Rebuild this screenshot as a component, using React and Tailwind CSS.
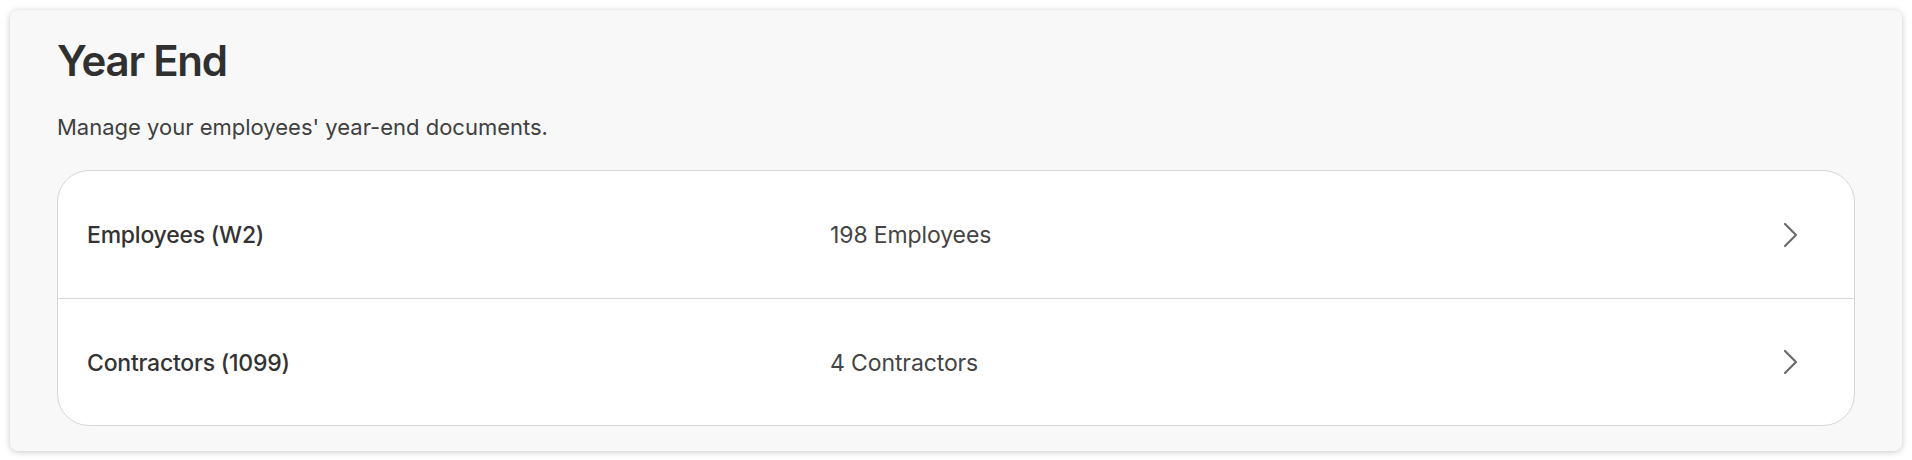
import React from "react";

const rows = [
  { label: "Employees (W2)", count: "198 Employees" },
  { label: "Contractors (1099)", count: "4 Contractors" },
];

const Chevron = () => (
  <svg width="16" height="26" viewBox="0 0 16 26" fill="none">
    <path d="M2 2l11 11L2 24" stroke="#6b6b6b" strokeWidth="2.2" strokeLinecap="round" strokeLinejoin="round" />
  </svg>
);

const App = () => {
  return (
    <div className="min-h-screen bg-white p-[10px]" style={{ fontFamily: "Inter, 'Noto Sans', sans-serif" }}>
      <div className="w-[1892px] rounded-lg bg-[#f8f8f8] px-[47px] pt-[26px] pb-[25px] shadow-[0_1px_6px_rgba(0,0,0,0.22)]">
        <h1 className="text-[42px] leading-[50px] font-semibold tracking-[-0.03em] text-[#303030]">Year End</h1>
        <p className="mt-[26px] text-[22px] leading-[30px] text-[#404040]">Manage your employees' year-end documents.</p>

        {/* Year end document groups */}
        <div className="mt-[28px] rounded-[32px] border border-[#d6d6d6] bg-white overflow-hidden">
          {rows.map((row, i) => (
            <div
              key={row.label}
              className={`grid h-[127px] grid-cols-[743px_1fr_auto] items-center pl-[29px] pr-[55px] ${i > 0 ? "border-t border-[#d6d6d6]" : ""}`}
            >
              <span className="pt-[2px] text-[23px] font-medium tracking-[-0.01em] text-[#333333]">{row.label}</span>
              <span className="pt-[2px] text-[23px] tracking-[-0.005em] text-[#444444]">{row.count}</span>
              <Chevron />
            </div>
          ))}
        </div>
      </div>
    </div>
  );
};

export default App;
